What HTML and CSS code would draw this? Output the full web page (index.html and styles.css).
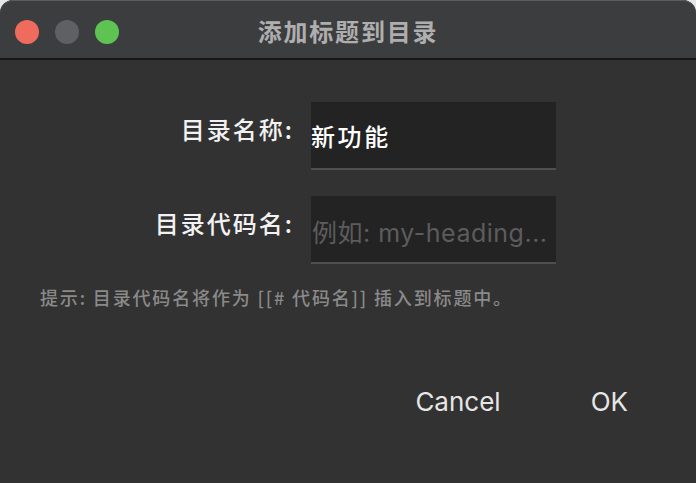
FILE: index.html
```html
<!DOCTYPE html>
<html lang="zh">
<head>
<meta charset="utf-8">
<link rel="stylesheet" href="styles.css">
</head>
<body>
<div class="window">
  <div class="titlebar">
    <div class="lights">
      <span class="light red"></span>
      <span class="light gray"></span>
      <span class="light green"></span>
    </div>
    <div class="title">添加标题到目录</div>
  </div>
  <div class="content">
    <div class="form">
      <div class="label">目录名称:</div>
      <div class="field"><span class="value">新功能</span></div>
      <div class="label">目录代码名:</div>
      <div class="field"><span class="placeholder">例如: my-heading...</span></div>
    </div>
    <div class="hint">提示: 目录代码名将作为 [[# 代码名]] 插入到标题中。</div>
    <div class="buttons">
      <span class="btn">Cancel</span>
      <span class="btn ok">OK</span>
    </div>
  </div>
</div>
</body>
</html>
```
FILE: styles.css
```css
html, body {
  margin: 0;
  padding: 0;
  background: #e6e6e6;
  height: 100%;
  overflow: hidden;
}
body {
  font-family: "Inter", "Noto Sans CJK SC", sans-serif;
}
.window {
  height: 483px;
  background: #323232;
  border-radius: 13px 13px 0 0;
  overflow: hidden;
}
.titlebar {
  position: relative;
  height: 58px;
  background: #3c3d3f;
  border-bottom: 2px solid #161616;
  border-radius: 13px 13px 0 0;
  box-shadow: inset 0 1px 0 #5c5d5f;
  display: flex;
  align-items: center;
  justify-content: center;
}
.lights {
  position: absolute;
  left: 15px;
  top: 20px;
  display: flex;
  gap: 16px;
}
.light {
  width: 24px;
  height: 24px;
  border-radius: 50%;
}
.red { background: #ef6b5e; }
.gray { background: #5f6064; }
.green { background: #5dc453; }
.title {
  font-family: "Noto Sans CJK SC", sans-serif;
  font-weight: 700;
  font-size: 24px;
  color: #aeaeae;
  margin-top: 3px;
  margin-left: 0;
  letter-spacing: 1.8px;
}
.content {
  padding-top: 42px;
}
.form {
  display: grid;
  grid-template-columns: 292px 245px;
  column-gap: 19px;
  row-gap: 26px;
}
.label {
  font-family: "Noto Sans CJK SC", sans-serif;
  font-weight: 500;
  font-size: 24px;
  line-height: 32px;
  color: #f2f2f2;
  text-align: right;
  padding-top: 11px;
  letter-spacing: 2px;
  margin-right: -2px;
}
.field {
  height: 66px;
  background: #232323;
  border-bottom: 2px solid #4f4f4f;
  display: flex;
  align-items: center;
}
.value {
  font-family: "Noto Sans CJK SC", sans-serif;
  font-weight: 500;
  font-size: 24px;
  color: #ffffff;
  margin-top: 1px;
  letter-spacing: 2.6px;
}
.placeholder {
  font-family: "Inter", "Noto Sans CJK SC", sans-serif;
  font-size: 25px;
  color: #5c5c5c;
  margin-left: 1px;
  margin-top: 4px;
  letter-spacing: 0.5px;
  white-space: nowrap;
}
.hint {
  font-family: "Noto Sans CJK SC", sans-serif;
  font-weight: 500;
  font-size: 18px;
  color: #8a8a8a;
  margin: 20px 0 0 40px;
  letter-spacing: 1.85px;
  white-space: nowrap;
}
.buttons {
  display: flex;
  justify-content: flex-end;
  gap: 90px;
  padding-right: 68px;
  margin-top: 76px;
}
.btn {
  font-family: "Inter", sans-serif;
  font-size: 26px;
  color: #e6e6e6;
}
```
